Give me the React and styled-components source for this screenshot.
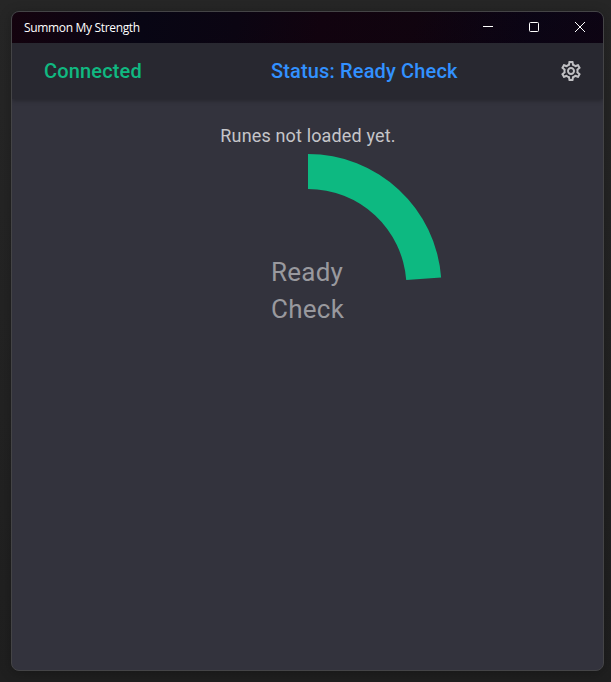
import React from "react";
import styled, { createGlobalStyle } from "styled-components";
import { MdOutlineSettings } from "react-icons/md";

const GlobalStyle = createGlobalStyle`
  * { box-sizing: border-box; }
  html, body { margin: 0; height: 100%; overflow: hidden; background: #232323; }
`;

const Desktop = styled.div`
  height: 682px;
  width: 611px;
  padding: 11px 7px 11px 11px;
  background: linear-gradient(#262626, #222222 60%, #1f1f1f);
  font-family: Roboto, sans-serif;
`;

const AppWindow = styled.main`
  display: flex;
  flex-direction: column;
  height: 660px;
  border: 1px solid #444446;
  border-radius: 8px;
  overflow: hidden;
  background: #33333d;
  box-shadow: 0 2px 12px rgba(0, 0, 0, 0.25);
`;

const TitleBar = styled.header`
  display: flex;
  flex: none;
  align-items: center;
  justify-content: space-between;
  height: 31px;
  padding-left: 12px;
  background: linear-gradient(165deg, transparent 40%, rgba(20, 3, 14, 0.3)),
    linear-gradient(100deg, #14030e 0%, #0f0411 10%, #080614 22%, #0b0512 38%, #11030f 52%, #10040f 68%, #080516 88%, #0b0515 100%);
`;

const WindowTitle = styled.span`
  color: #fff;
  font: 12px/16px "Open Sans", "Noto Sans", sans-serif;
  letter-spacing: -0.33px;
`;

const WindowControls = styled.div`
  display: flex;
  height: 100%;
`;

const ControlButton = styled.button`
  display: grid;
  place-items: center;
  width: 46px;
  height: 30px;
  padding: 0;
  border: 0;
  background: none;
  color: #fff;
`;

const Toolbar = styled.nav`
  display: grid;
  grid-template-columns: 227px 1fr 40px;
  align-items: center;
  flex: none;
  height: 56px;
  padding: 0 12px 0 32px;
  background: #282830;
  box-shadow: 0 2px 4px rgba(0, 0, 0, 0.25);
`;

const ToolbarLabel = styled.span`
  color: ${({ $color }) => $color};
  font-size: 20px;
  font-weight: 500;
  line-height: 32px;
  letter-spacing: 0.15px;
  white-space: nowrap;
`;

const SettingsButton = styled.button`
  display: grid;
  place-items: center;
  width: 40px;
  height: 40px;
  padding: 0;
  border: 0;
  background: none;
  color: #c0c0c3;
`;

const Content = styled.section`
  display: flex;
  flex-direction: column;
  align-items: center;
  padding: 24px 0 0 1px;
`;

const Message = styled.p`
  margin: 0;
  color: #c5c5c9;
  font-size: 18px;
  line-height: 26px;
  letter-spacing: 0.15px;
`;

const Countdown = styled.div`
  display: grid;
  place-items: center;
  width: 268px;
  height: 267px;
  margin-top: 5px;
  > * { grid-area: 1 / 1; }
`;

const CountdownLabel = styled.span`
  width: 74px;
  color: #99999e;
  font-size: 26px;
  line-height: 37px;
  letter-spacing: 0.25px;
  padding-top: 6px;
`;

export default function App() {
  return (
    <Desktop>
      <GlobalStyle />
      <AppWindow>
        <TitleBar>
          <WindowTitle>Summon My Strength</WindowTitle>
          <WindowControls>
            <ControlButton aria-label="Minimize">
              <svg width="10" height="10"><path d="M0 4.5H10" stroke="currentColor" /></svg>
            </ControlButton>
            <ControlButton aria-label="Maximize">
              <svg width="10" height="10"><rect x=".5" y=".5" width="9" height="9" rx="1" fill="none" stroke="currentColor" /></svg>
            </ControlButton>
            <ControlButton aria-label="Close">
              <svg width="10" height="10"><path d="M0 0L10 10M10 0L0 10" stroke="currentColor" /></svg>
            </ControlButton>
          </WindowControls>
        </TitleBar>
        <Toolbar>
          <ToolbarLabel $color="#10b981">Connected</ToolbarLabel>
          <ToolbarLabel $color="#3291ff">Status: Ready Check</ToolbarLabel>
          <SettingsButton aria-label="Settings"><MdOutlineSettings size={24} /></SettingsButton>
        </Toolbar>
        <Content>
          <Message>Runes not loaded yet.</Message>
          <Countdown>
            <svg width="268" height="267" viewBox="-134 -133.5 268 267">
              <path d="M0 -133.5A133.5 133.5 0 0 1 133.12 -10L98.22 -7.38A98.5 98.5 0 0 0 0 -98.5Z" fill="#0db981" />
            </svg>
            <CountdownLabel>Ready Check</CountdownLabel>
          </Countdown>
        </Content>
      </AppWindow>
    </Desktop>
  );
}
